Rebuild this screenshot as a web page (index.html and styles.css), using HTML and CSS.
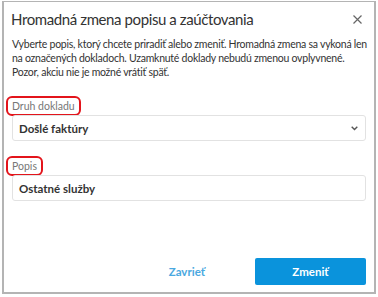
FILE: index.html
```html
<!DOCTYPE html>
<html lang="sk">
<head>
<meta charset="utf-8">
<link rel="stylesheet" href="styles.css">
</head>
<body>
<div class="dialog">
  <div class="header">
    <h1 class="title">Hromadná zmena popisu a zaúčtovania</h1>
    <span class="close"><svg width="9" height="9" viewBox="0 0 9 9"><path d="M0.5 0.5L8.5 8.5M8.5 0.5L0.5 8.5" stroke="#666" stroke-width="1.2" fill="none"/></svg></span>
  </div>
  <p class="desc">Vyberte popis, ktorý chcete priradiť alebo zmeniť. Hromadná zmena sa vykoná len<br>na označených dokladoch. Uzamknuté doklady nebudú zmenou ovplyvnené.<br>Pozor, akciu nie je možné vrátiť späť.</p>
  <div class="field">
    <span class="label"><span class="mark">Druh dokladu</span></span>
    <div class="control select">
      <span>Došlé faktúry</span>
      <svg width="7" height="5" viewBox="0 0 7 5"><path d="M0.7 0.8L3.5 3.6L6.3 0.8" stroke="#555" stroke-width="1.4" fill="none"/></svg>
    </div>
  </div>
  <div class="field">
    <span class="label"><span class="mark">Popis</span></span>
    <div class="control"><span>Ostatné služby</span></div>
  </div>
  <div class="footer">
    <button class="btn btn-link">Zavrieť</button>
    <button class="btn btn-primary">Zmeniť</button>
  </div>
</div>
</body>
</html>
```
FILE: styles.css
```css
* { box-sizing: border-box; }
html, body { margin: 0; background: #fff; }
body {
  padding: 1px 2px 0 2px;
  font-family: "Lato", "Noto Sans", sans-serif;
  color: #333;
}
.dialog {
  width: 374px;
  height: 293px;
  border: 2px solid #b4b4b4;
  border-top-width: 1px;
  display: flex;
  flex-direction: column;
  padding: 0 8px 7px 7px;
}
.header {
  display: flex;
  align-items: center;
  justify-content: space-between;
  height: 32px;
  padding-top: 2px;
}
.title {
  margin: 0;
  font-size: 15px;
  letter-spacing: -0.4px;
  font-weight: 400;
  color: #333;
  white-space: nowrap;
}
.close { display: flex; margin-right: 4px; margin-top: 1px; }
.desc {
  margin: 3px 0 0 1px;
  font-size: 10.5px;
  letter-spacing: -0.25px;
  line-height: 14px;
  color: #333;
  white-space: nowrap;
}
.field { display: flex; flex-direction: column; margin-top: 18px; }
.field + .field { margin-top: 16px; }
.label {
  font-size: 10.5px;
  color: #777;
  height: 18px;
  display: flex;
  align-items: center;
}
.mark {
  border: 2px solid #e3141b;
  border-radius: 6px;
  padding: 1px 4px 1px 4px;
  margin-left: -5px;
  height: 20px;
  display: flex;
  align-items: center;
}
.control {
  height: 26px;
  border: 1px solid #e2e2e2;
  border-radius: 3px;
  margin-left: 1px;
  display: flex;
  align-items: center;
  justify-content: space-between;
  padding: 0 7px 0 6px;
  font-size: 11.5px;
  font-weight: 700;
  color: #333;
}
.footer {
  margin-top: auto;
  display: flex;
  justify-content: flex-end;
  align-items: center;
  gap: 50px;
}
.btn {
  font-family: inherit;
  border: 0;
  background: none;
  font-size: 11.5px;
  font-weight: 700;
  cursor: pointer;
}
.btn-link { color: #4aa8e0; padding: 0; }
.btn-primary {
  width: 111px;
  height: 27px;
  background: #0a93dc;
  color: #fff;
  border-radius: 2px;
}
```
